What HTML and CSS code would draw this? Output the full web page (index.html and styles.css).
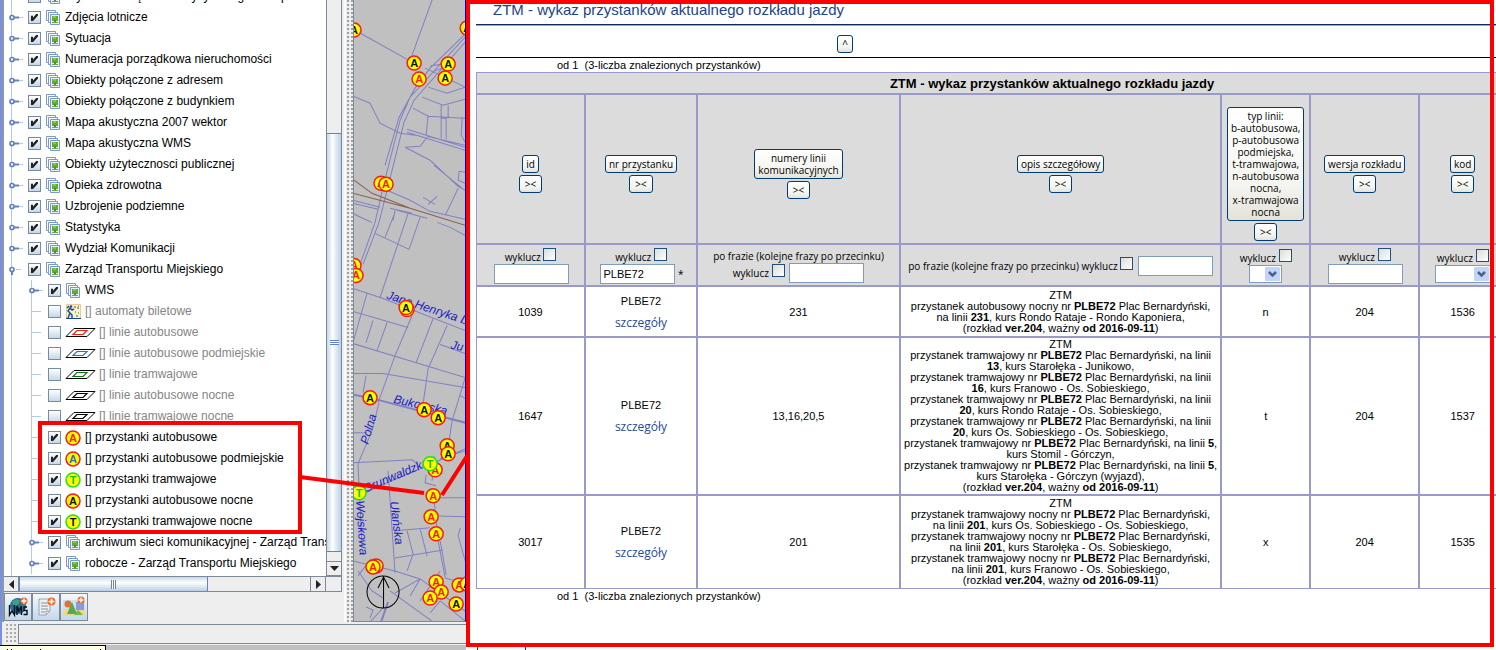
FILE: index.html
```html
<!DOCTYPE html>
<html lang="pl">
<head>
<meta charset="utf-8">
<title>ZTM - wykaz przystanków</title>
<link rel="stylesheet" href="styles.css">
</head>
<body>
<svg class="defs" aria-hidden="true">
  <defs>
    <symbol id="key" viewBox="0 0 14 21"><path d="M2.500 0V21" stroke="#b4cae0"/><path d="M7 10.500H14" stroke="#b4cae0"/><path d="M5 10.500H10" stroke="#6382bf" stroke-width="2"/><circle cx="3" cy="10.500" r="2" fill="#fff" stroke="#6382bf" stroke-width="1.700"/></symbol>
    <symbol id="keyopen" viewBox="0 0 14 21"><path d="M2.500 0V21M7 10.500H12" stroke="#b4cae0"/><path d="M3 12V16" stroke="#6382bf" stroke-width="2"/><circle cx="3" cy="10.500" r="2" fill="#fff" stroke="#6382bf" stroke-width="1.700"/></symbol>
    <symbol id="branch" viewBox="0 0 14 21"><path d="M2.500 0V21M2 10.500H12" stroke="#b4cae0"/></symbol>
    <symbol id="layers" viewBox="0 0 15 15"><path d="M.5.5H9.500V10.500H.5Z" fill="#fff" stroke="#7b98c6"/><path d="M2.500 2.500H11.500V12.500H2.500Z" fill="#fff" stroke="#7b98c6"/><path d="M4.500 4.500H13.500V14.500H4.500Z" fill="#e8f0fa" stroke="#7b98c6"/><path d="M6 6H12V11H6Z" fill="#58b030"/><path d="M7 6H10V8H7Z" fill="#86c840"/><path d="M8 10H10V13H8Z" fill="#8a7030"/><path d="M6 12H12V13H6Z" fill="#6aa84a"/></symbol>
    <symbol id="ticket" viewBox="0 0 15 15"><path d="M.5.5H14.500V14.500H.5Z" fill="#fbf3c0" stroke="#f4c888"/><path d="M2 14L4 9L2 7L4 4L6 6L8 5M4 9L6 11V14M1 4L3 2" stroke="#1850a8" stroke-width="1.500" fill="none"/><circle cx="5" cy="2.500" r="1.300" fill="#1850a8"/><path d="M8 3H10M11 4H13M9 8H10M12 9H13M10 12H12M12 2H13" stroke="#2060a0"/><path d="M0 14.500H15" stroke="#1840a0"/></symbol>
    <symbol id="para" viewBox="0 0 31 13"><path d="M1 10.500L9 2.500H30L22 10.500Z" fill="#fff" stroke="#000"/><path d="M8 8.500L12 4.500H22L18 8.500Z" fill="none" stroke="currentColor" stroke-width="1.200"/></symbol>
    <g id="am"><circle r="7" fill="#ff0" stroke="#f51c14" stroke-width="1.500"/><text class="mk mk-red" y="4">A</text></g>
    <g id="ak"><circle r="7" fill="#ff0" stroke="#f51c14" stroke-width="1.500"/><text class="mk" y="4">A</text></g>
    <g id="ab"><circle r="7" fill="#ff0" stroke="#f51c14" stroke-width="1.500"/><text class="mk mk-blue" y="4">A</text></g>
    <g id="tg"><circle r="7" fill="#ff0" stroke="#20e020" stroke-width="1.500"/><text class="mk mk-green" y="4">T</text></g>
    <g id="tk"><circle r="7" fill="#ff0" stroke="#20e020" stroke-width="1.500"/><text class="mk" y="4">T</text></g>
    <symbol id="plus" viewBox="0 0 8 8"><circle cx="4" cy="4" r="3.500" fill="#ee6a20"/><path d="M4 1.500V6.500M1.500 4H6.500" stroke="#fff" stroke-width="1.500"/></symbol>
  </defs>
</svg>
<div class="screen">
<section class="gis">
  <div class="work">
    <div class="side">
      <div class="treebox">
        <div class="viewport">
          <ul class="tree">
            <li><svg class="key"><use href="#key"/></svg><label><input type="checkbox" checked><svg class="lay"><use href="#layers"/></svg>Wydział Zarządzania Kryzysowego i Bezpieczeństwa</label></li>
            <li><svg class="key"><use href="#key"/></svg><label><input type="checkbox" checked><svg class="lay"><use href="#layers"/></svg>Zdjęcia lotnicze</label></li>
            <li><svg class="key"><use href="#key"/></svg><label><input type="checkbox" checked><svg class="lay"><use href="#layers"/></svg>Sytuacja</label></li>
            <li><svg class="key"><use href="#key"/></svg><label><input type="checkbox" checked><svg class="lay"><use href="#layers"/></svg>Numeracja porządkowa nieruchomości</label></li>
            <li><svg class="key"><use href="#key"/></svg><label><input type="checkbox" checked><svg class="lay"><use href="#layers"/></svg>Obiekty połączone z adresem</label></li>
            <li><svg class="key"><use href="#key"/></svg><label><input type="checkbox" checked><svg class="lay"><use href="#layers"/></svg>Obiekty połączone z budynkiem</label></li>
            <li><svg class="key"><use href="#key"/></svg><label><input type="checkbox" checked><svg class="lay"><use href="#layers"/></svg>Mapa akustyczna 2007 wektor</label></li>
            <li><svg class="key"><use href="#key"/></svg><label><input type="checkbox" checked><svg class="lay"><use href="#layers"/></svg>Mapa akustyczna WMS</label></li>
            <li><svg class="key"><use href="#key"/></svg><label><input type="checkbox" checked><svg class="lay"><use href="#layers"/></svg>Obiekty użytecznosci publicznej</label></li>
            <li><svg class="key"><use href="#key"/></svg><label><input type="checkbox" checked><svg class="lay"><use href="#layers"/></svg>Opieka zdrowotna</label></li>
            <li><svg class="key"><use href="#key"/></svg><label><input type="checkbox" checked><svg class="lay"><use href="#layers"/></svg>Uzbrojenie podziemne</label></li>
            <li><svg class="key"><use href="#key"/></svg><label><input type="checkbox" checked><svg class="lay"><use href="#layers"/></svg>Statystyka</label></li>
            <li><svg class="key"><use href="#key"/></svg><label><input type="checkbox" checked><svg class="lay"><use href="#layers"/></svg>Wydział Komunikacji</label></li>
            <li class="parent"><svg class="key"><use href="#keyopen"/></svg><label><input type="checkbox" checked><svg class="lay"><use href="#layers"/></svg>Zarząd Transportu Miejskiego</label>
              <ul class="sub">
                <li><svg class="key"><use href="#key"/></svg><label><input type="checkbox" checked><svg class="lay"><use href="#layers"/></svg>WMS</label></li>
                <li class="off"><svg class="key"><use href="#branch"/></svg><label><input type="checkbox"><svg class="lay"><use href="#ticket"/></svg>[] automaty biletowe</label></li>
                <li class="off"><svg class="key"><use href="#branch"/></svg><label><input type="checkbox"><svg class="para red"><use href="#para"/></svg>[] linie autobusowe</label></li>
                <li class="off"><svg class="key"><use href="#branch"/></svg><label><input type="checkbox"><svg class="para blue"><use href="#para"/></svg>[] linie autobusowe podmiejskie</label></li>
                <li class="off"><svg class="key"><use href="#branch"/></svg><label><input type="checkbox"><svg class="para green"><use href="#para"/></svg>[] linie tramwajowe</label></li>
                <li class="off"><svg class="key"><use href="#branch"/></svg><label><input type="checkbox"><svg class="para black"><use href="#para"/></svg>[] linie autobusowe nocne</label></li>
                <li class="off"><svg class="key"><use href="#branch"/></svg><label><input type="checkbox"><svg class="para black"><use href="#para"/></svg>[] linie tramwajowe nocne</label></li>
                <li><svg class="key"><use href="#branch"/></svg><label><input type="checkbox" checked><svg class="stop" viewBox="-8 -8 16 16"><use href="#am"/></svg>[] przystanki autobusowe</label></li>
                <li><svg class="key"><use href="#branch"/></svg><label><input type="checkbox" checked><svg class="stop" viewBox="-8 -8 16 16"><use href="#ab"/></svg>[] przystanki autobusowe podmiejskie</label></li>
                <li><svg class="key"><use href="#branch"/></svg><label><input type="checkbox" checked><svg class="stop" viewBox="-8 -8 16 16"><use href="#tg"/></svg>[] przystanki tramwajowe</label></li>
                <li><svg class="key"><use href="#branch"/></svg><label><input type="checkbox" checked><svg class="stop" viewBox="-8 -8 16 16"><use href="#ak"/></svg>[] przystanki autobusowe nocne</label></li>
                <li><svg class="key"><use href="#branch"/></svg><label><input type="checkbox" checked><svg class="stop" viewBox="-8 -8 16 16"><use href="#tk"/></svg>[] przystanki tramwajowe nocne</label></li>
                <li><svg class="key"><use href="#key"/></svg><label><input type="checkbox" checked><svg class="lay"><use href="#layers"/></svg>archiwum sieci komunikacyjnej - Zarząd Transportu</label></li>
                <li><svg class="key"><use href="#key"/></svg><label><input type="checkbox" checked><svg class="lay"><use href="#layers"/></svg>robocze - Zarząd Transportu Miejskiego</label></li>
              </ul>
            </li>
          </ul>
        </div>
        <div class="vscroll"><div class="vtrack"><div class="vthumb"><i class="grip-v"></i></div></div><button class="arrow" aria-label="W dół"><svg viewBox="0 0 9 5"><path d="M0 0H9L4.500 5Z"/></svg></button></div>
      </div>
      <div class="hscroll"><button class="arrow" aria-label="W lewo"><svg class="side-arrow" viewBox="0 0 5 9"><path d="M5 0V9L0 4.500Z"/></svg></button><div class="htrack"><div class="hthumb"><i class="grip-h"></i></div></div><button class="arrow" aria-label="W prawo"><svg class="side-arrow" viewBox="0 0 5 9"><path d="M0 0V9L5 4.500Z"/></svg></button><div class="corner"></div></div>
      <div class="tools">
        <button aria-label="Dodaj WMS"><svg viewBox="0 0 22 22"><circle cx="11" cy="10" r="8" fill="#2b6a9a"/><path d="M5 6C8 2 12 3 13 5L11 9L7 10ZM13 10L18 9L17 14L13 14Z" fill="#3fa07c"/><path d="M2.500 9V19L5 15L7.500 19V9M10 19V10L12 15L14.500 10V19M20 11H17V14.500H20V18.500H16.500" stroke="#061018" stroke-width="1.400" fill="none"/><use href="#plus" x="13" y="1" width="8" height="8"/></svg></button>
        <button aria-label="Dodaj dokument"><svg viewBox="0 0 22 22"><path d="M4 3H15V15L11 19H4Z" fill="#eceff2" stroke="#9aa4ae"/><path d="M6 7H13M6 10H13M6 13H13M6 16H10" stroke="#8a929a"/><path d="M11 19V15H15" fill="none" stroke="#9aa4ae"/><use href="#plus" x="12" y="1" width="9" height="9"/></svg></button>
        <button aria-label="Dodaj obraz"><svg viewBox="0 0 22 22"><path d="M0 4H22V20H0Z" fill="#cfe0ee"/><path d="M0 13H22V20H0Z" fill="#ecd98a"/><path d="M13 6H21V14H13Z" fill="#8c98dc"/><circle cx="5" cy="8" r="3.500" fill="#e07038"/><path d="M9 6L4 18H14Z" fill="#58a850"/><path d="M15 14L11 19H20Z" fill="#6cb850"/><use href="#plus" x="14" y="0" width="8" height="8"/></svg></button>
      </div>
    </div>
    <div class="splitter"></div>
    <div class="map">
      <svg viewBox="354 0 111 620" preserveAspectRatio="xMinYMin slice">
        <g class="roads">
          <path d="M432 0L412 55M360 33L412 62M425 68L465 87M465 37L410 97L400 120L383 187L375 222L360 264M465 42L414 100L404 122L388 186L379 222L363 264M465 34L430 68L415 88L399 117L385 165M430 66L455 62M432 72L446 66"/>
          <path d="M353 96L370 103L380 123L400 133L415 135M407 129L465 147M407 132L465 150M428 87L447 93L465 87M422 97L443 105L465 99M413 108L428 116L465 118M441 105V138M448 105V118M441 118H446V139M428 115L426 135M462 117L461 135L465 142M427 136L465 145M405 147L420 146L427 137M405 147L430 160L458 186L465 190M434 165L462 188M458 188L445 215M423 197L435 204M437 196L428 204M387 190L410 200L430 211L465 219M465 172L459 171L458 180L465 183"/>
          <path d="M353 200L380 207M353 203L378 209M353 213Q360 217 372 222M390 208L412 213M395 210L393 220M395 212L385 237M408 213L380 297M420 217L409 249M375 233L409 249M397 210L427 218M437 222L450 227L465 235"/>
          <path d="M353 288L383 298L465 330M367 293L353 342M353 311L408 327M373 320L366 342M387 322L377 350M412 315L395 355L378 402M353 343L465 377M433 318L416 362M447 325L428 368L423 403M440 344L465 353M353 373L383 373L465 387M465 377L452 420M366 375L363 392M379 402L372 430L358 463L362 545M353 432H367M460 395L465 398"/>
          <path d="M353 462L412 459L417 463M353 498L380 485L450 455L465 448M388 470L395 572M395 557L443 549M395 530L430 527M407 530L413 553L407 570M420 528L427 555M434 455L432 480M434 500L438 540L445 577L465 583M440 540L446 574M353 560L395 570L420 578L465 610M358 570L372 590L383 597M358 575L371 558M440 497H465M430 515L465 516M460 527L458 535L465 560M452 420L447 453M465 450L440 458M426 474L425 482L436 485M395 592L420 578M410 595L420 578M383 607L370 621M390 590L433 621M420 600L440 570M430 612L440 600L465 620M366 606L373 609L370 617"/>
        </g>
        <path class="road-wide" d="M353 394L377 399L465 422M388 601L381 621"/>
        <path class="rail" d="M353 179L372 193L410 208L465 225M353 193L410 208"/>
        <g class="streets">
          <text transform="translate(386 298) rotate(18)">Jana Henryka D</text>
          <text transform="translate(450 348) rotate(12)">Ju</text>
          <text transform="translate(393 402) rotate(13)">Bukowska</text>
          <text transform="translate(368 444) rotate(-74)">Polna</text>
          <text transform="translate(365 492) rotate(-23)">Grunwaldzka</text>
          <text transform="translate(356 500) rotate(86)">Wojskowa</text>
          <text transform="translate(390 501) rotate(83)">Ułańska</text>
        </g>
        <use href="#ak" x="354" y="30"/><use href="#ak" x="467" y="28"/><use href="#ak" x="414" y="63"/><use href="#ak" x="448" y="64"/><use href="#ak" x="445" y="78"/><use href="#am" x="419" y="79"/><use href="#am" x="381" y="183"/><use href="#am" x="386" y="184"/>
        <use href="#am" x="354" y="265"/><use href="#am" x="356" y="275"/><use href="#am" x="407" y="309"/><use href="#ak" x="406" y="307"/><use href="#ak" x="370" y="397"/><use href="#ak" x="424" y="409"/><use href="#ak" x="438" y="417"/>
        <use href="#ak" x="447" y="445"/><use href="#ak" x="448" y="453"/><use href="#am" x="435" y="469"/><use href="#tg" x="430" y="463"/><use href="#tg" x="359" y="492"/><use href="#am" x="433" y="495"/><use href="#am" x="431" y="516"/><use href="#am" x="436" y="533"/><use href="#am" x="376" y="565"/><use href="#am" x="373" y="566"/><use href="#am" x="436" y="581"/><use href="#am" x="441" y="591"/><use href="#am" x="430" y="597"/><use href="#am" x="459" y="584"/><use href="#ak" x="467" y="583"/><use href="#ak" x="456" y="603"/>
        <g class="north"><circle cx="383" cy="591" r="16"/><path d="M383.500 575V607M383.500 576L378 587M383.500 576L389 587"/></g>
      </svg>
    </div>
  </div>
  <div class="status"><i class="dots"></i><div class="field"></div></div>
  <div class="bottom"><div class="tip"><svg viewBox="0 0 104 4"><path d="M7 3.500H8M11 3.500H12M40 3.500H41M100 3.500H101" stroke="#000"/></svg></div></div>
  <svg class="marks" aria-hidden="true"><path d="M300 477L424 493M442 495L467 456"/><path d="M40 423H300V532H40Z"/></svg>
</section>

<main class="report">
  <h1>ZTM - wykaz przystanków aktualnego rozkładu jazdy</h1>
  <div class="fold"><button class="xp up">^</button></div>
  <p class="count">od 1 &nbsp;(3-liczba znalezionych przystanków)</p>
  <table>
    <colgroup><col class="c1"><col class="c2"><col class="c3"><col><col class="c5"><col class="c6"><col class="c7"></colgroup>
    <thead>
      <tr class="cap"><th colspan="7">ZTM - wykaz przystanków aktualnego rozkładu jazdy</th></tr>
      <tr class="heads">
        <th><button class="xp">id</button><button class="xp pair">&gt;&lt;</button></th>
        <th><button class="xp">nr przystanku</button><button class="xp pair">&gt;&lt;</button></th>
        <th><button class="xp">numery linii<br>komunikacyjnych</button><button class="xp pair">&gt;&lt;</button></th>
        <th><button class="xp">opis szczegółowy</button><button class="xp pair">&gt;&lt;</button></th>
        <th><button class="xp">typ linii:<br>b-autobusowa,<br>p-autobusowa<br>podmiejska,<br>t-tramwajowa,<br>n-autobusowa<br>nocna,<br>x-tramwajowa<br>nocna</button><button class="xp pair">&gt;&lt;</button></th>
        <th><button class="xp">wersja rozkładu</button><button class="xp pair">&gt;&lt;</button></th>
        <th><button class="xp">kod</button><button class="xp pair">&gt;&lt;</button></th>
      </tr>
      <tr class="filters">
        <td><label>wyklucz <input type="checkbox"></label><br><input type="text" aria-label="id"></td>
        <td><label>wyklucz <input type="checkbox"></label><br><input type="text" value="PLBE72" aria-label="nr przystanku"> *</td>
        <td>po frazie (kolejne frazy po przecinku)<br><label>wyklucz <input type="checkbox"></label> <input type="text" aria-label="numery linii"></td>
        <td><label>po frazie (kolejne frazy po przecinku) wyklucz <input type="checkbox"></label> <input type="text" aria-label="opis"></td>
        <td><label>wyklucz <input type="checkbox"></label><br><select class="narrow" aria-label="typ linii"><option></option></select></td>
        <td><label>wyklucz <input type="checkbox"></label><br><input type="text" aria-label="wersja rozkładu"></td>
        <td><label>wyklucz <input type="checkbox"></label><br><select aria-label="kod"><option></option></select></td>
      </tr>
    </thead>
    <tbody>
      <tr class="r1"><td>1039</td><td class="stopno">PLBE72<br><a href="#">szczegóły</a></td><td>231</td>
        <td class="desc">ZTM<br>przystanek autobusowy nocny nr <b>PLBE72</b> Plac Bernardyński,<br>na linii <b>231</b>, kurs Rondo Rataje - Rondo Kaponiera,<br>(rozkład <b>ver.204</b>, ważny <b>od 2016-09-11</b>)</td>
        <td>n</td><td>204</td><td>1536</td></tr>
      <tr class="r2"><td>1647</td><td class="stopno">PLBE72<br><a href="#">szczegóły</a></td><td>13,16,20,5</td>
        <td class="desc">ZTM<br>przystanek tramwajowy nr <b>PLBE72</b> Plac Bernardyński, na linii<br><b>13</b>, kurs Starołęka - Junikowo,<br>przystanek tramwajowy nr <b>PLBE72</b> Plac Bernardyński, na linii<br><b>16</b>, kurs Franowo - Os. Sobieskiego,<br>przystanek tramwajowy nr <b>PLBE72</b> Plac Bernardyński, na linii<br><b>20</b>, kurs Rondo Rataje - Os. Sobieskiego,<br>przystanek tramwajowy nr <b>PLBE72</b> Plac Bernardyński, na linii<br><b>20</b>, kurs Os. Sobieskiego - Os. Sobieskiego,<br>przystanek tramwajowy nr <b>PLBE72</b> Plac Bernardyński, na linii <b>5</b>,<br>kurs Stomil - Górczyn,<br>przystanek tramwajowy nr <b>PLBE72</b> Plac Bernardyński, na linii <b>5</b>,<br>kurs Starołęka - Górczyn (wyjazd),<br>(rozkład <b>ver.204</b>, ważny <b>od 2016-09-11</b>)</td>
        <td>t</td><td>204</td><td>1537</td></tr>
      <tr class="r3"><td>3017</td><td class="stopno">PLBE72<br><a href="#">szczegóły</a></td><td>201</td>
        <td class="desc">ZTM<br>przystanek tramwajowy nocny nr <b>PLBE72</b> Plac Bernardyński,<br>na linii <b>201</b>, kurs Os. Sobieskiego - Os. Sobieskiego,<br>przystanek tramwajowy nocny nr <b>PLBE72</b> Plac Bernardyński,<br>na linii <b>201</b>, kurs Starołęka - Os. Sobieskiego,<br>przystanek tramwajowy nocny nr <b>PLBE72</b> Plac Bernardyński,<br>na linii <b>201</b>, kurs Franowo - Os. Sobieskiego,<br>(rozkład <b>ver.204</b>, ważny <b>od 2016-09-11</b>)</td>
        <td>x</td><td>204</td><td>1535</td></tr>
    </tbody>
  </table>
  <p class="count">od 1 &nbsp;(3-liczba znalezionych przystanków)</p>
  <button class="xp below" aria-label="Zamknij"></button>
  <div class="frame"></div>
</main>
</div>
</body>
</html>
```

FILE: styles.css
```css
* { box-sizing: border-box; }
body {
  margin: 0;
  font-family: "Liberation Sans", Arial, sans-serif;
  font-size: 12px;
  color: #000;
  background: #fff;
}
button { font: inherit; color: inherit; margin: 0; padding: 0; }
svg { display: block; }
.defs { position: absolute; width: 0; height: 0; }

.screen {
  display: flex;
  height: 100vh;
  overflow: hidden;
}

/* GIS window on the left */
.gis {
  position: relative;
  flex: 0 0 auto;
  width: 31%;
  min-width: 466px;
  display: flex;
  flex-direction: column;
  background: #eee;
  overflow: hidden;
}
.work { flex: 1; display: flex; min-height: 0; border-left: 2px solid #7a90dc; }
.side { flex: 0 0 342px; min-width: 0; display: flex; flex-direction: column; border-left: 2px solid #8a98a8; }
.treebox { flex: 1; min-height: 0; display: flex; margin-right: 2px; background: #fff; }
.viewport { flex: 1; min-width: 0; overflow: hidden; }
.tree, .sub { list-style: none; margin: 0; padding: 0; }
.tree { margin-top: -14px; padding-left: 5px; }
.tree li { display: flex; flex-wrap: wrap; align-items: center; white-space: nowrap; line-height: 21px; }
.tree .parent { position: relative; }
.sub { flex: 0 0 100%; min-width: 0; padding-left: 20px; }
.sub::before {
  content: "";
  position: absolute;
  left: 2px;
  top: 21px;
  bottom: -2px;
  border-left: 1px solid #b4cae0;
}
.tree label { display: flex; align-items: center; height: 21px; flex: 1; min-width: 0; overflow: hidden; }
.key { width: 14px; height: 21px; flex: none; margin-right: 5px; }
.lay { width: 15px; height: 15px; margin: 0 4px 0 5px; flex: none; }
.stop { width: 16px; height: 16px; margin: 0 4px; flex: none; }
.para { width: 31px; height: 13px; margin: 0 3px 0 4px; flex: none; }
.red { color: #f02010; }
.blue { color: #1878e0; }
.green { color: #107010; }
.black { color: #000; }
.off { color: #858585; }
.tree input {
  appearance: none;
  flex: none;
  width: 13px;
  height: 13px;
  margin: 0;
  border: 1px solid #7a8a99;
  background: linear-gradient(#fff, #c4d8ea);
}
.tree input:checked::before {
  content: "";
  display: block;
  width: 7px;
  height: 7px;
  margin: 2px;
  background: #222;
  clip-path: polygon(0 25%, 28% 25%, 28% 55%, 75% 0, 100% 0, 100% 20%, 30% 100%, 0 100%);
}

.vscroll { flex: 0 0 16px; display: flex; flex-direction: column; border: solid #7a8a99; border-width: 0 1px 0 1px; }
.vtrack { flex: 1; background: #eee; padding: 133px 0 9px; }
.vthumb {
  height: 100%;
  display: flex;
  align-items: center;
  justify-content: center;
  border: solid #6382bf;
  border-width: 1px 0;
  background: linear-gradient(90deg, #c4d8ea, #fff 40%, #b8cfe5);
}
.grip-v { width: 9px; height: 5px; background: repeating-linear-gradient(#6382bf 0 1px, #fff 1px 2px); }
.grip-h { width: 5px; height: 9px; background: repeating-linear-gradient(90deg, #6382bf 0 1px, #fff 1px 2px); }
.arrow {
  display: flex;
  align-items: center;
  justify-content: center;
  width: 14px;
  height: 15px;
  border: solid #7a8a99;
  border-width: 1px 0;
  background: #eee;
  fill: #222;
}
.arrow svg { width: 9px; height: 5px; }
.arrow .side-arrow { width: 5px; height: 9px; }
.hscroll { display: flex; height: 16px; margin-right: 2px; border: 1px solid #7a8a99; border-left: 0; }
.hscroll .arrow { width: 15px; height: 14px; border-width: 0 1px 0 0; }
.htrack { flex: 1; border-right: 1px solid #7a8a99; background: #eee; }
.hthumb {
  width: 65%;
  height: 14px;
  display: flex;
  align-items: center;
  justify-content: center;
  border: solid #6382bf;
  border-width: 0 1px;
  background: linear-gradient(#c4d8ea, #fff 40%, #b8cfe5);
}
.corner { width: 15px; background: #eee; }
.tools { display: flex; height: 30px; padding-top: 1px; }
.tools button {
  width: 28px;
  height: 28px;
  border: 1px solid #7a8a99;
  background: linear-gradient(#f4f8fc, #c4d8ea);
  display: flex;
  align-items: center;
  justify-content: center;
}
.tools svg { width: 22px; height: 22px; }

.splitter {
  flex: 0 0 9px;
  border-left: 2px solid #fafafa;
  background: radial-gradient(circle at 1px 1px, #a0a0a0 0 1px, #eee 1px) 1px 0 / 4px 4px;
}
.map { flex: 1; min-width: 0; background: #c0c0c0; border: solid #7a8a99; border-width: 0 1px 1px 1px; border-right-color: #0000b8; overflow: hidden; }
.map svg { width: 100%; height: 100%; }
.roads { fill: none; stroke: #8080c4; stroke-width: 1; }
.road-wide { fill: none; stroke: #8080c4; stroke-width: 2; }
.rail { fill: none; stroke: #86604e; stroke-width: 1; }
.streets { font-size: 12px; font-style: italic; fill: #1c1cc4; }
.mk { font-size: 11px; font-weight: bold; text-anchor: middle; fill: #111; }
.mk-red { fill: #f51c14; }
.mk-blue { fill: #3870b0; }
.mk-green { fill: #18c018; }
.north { fill: none; stroke: #000; stroke-width: 1; }

.status { flex: 0 0 23px; display: flex; padding: 2px 0 0 4px; border-left: 2px solid #7a90dc; }
.dots { width: 12px; height: 19px; background: radial-gradient(circle at 1px 1px, #aaa 0 1px, #eee 1px) 0 0 / 4px 4px; }
.field { flex: 1; height: 20px; border: 1px solid #7a8a99; border-right: 0; }
.bottom { flex: 0 0 5px; background: #c0c0c0; }
.tip { width: 106px; height: 5px; border: solid #000; border-width: 1px 1px 0 0; background: #ffffe1; }
.tip svg { width: 104px; height: 4px; }
.marks { position: absolute; left: 0; top: 0; width: 100%; height: 100%; pointer-events: none; fill: none; stroke: #f00; stroke-width: 4; }

/* Stop list on the right */
.report {
  position: relative;
  flex: 1;
  min-width: 0;
  padding-left: 10px;
  overflow: hidden;
}
h1 {
  margin: 0;
  height: 26px;
  padding-left: 17px;
  border-bottom: 1px solid #8ca8cc;
  box-shadow: inset 0 -1px #0c2c60;
  font-size: 15px;
  font-weight: normal;
  line-height: 20px;
  color: #1c4488;
}
.fold { height: 32px; padding-top: 9px; display: flex; justify-content: center; border-bottom: 1px solid #000; padding-right: 282px; }
.count { margin: 0; padding-left: 81px; font-size: 11px; line-height: 14px; }
.xp {
  display: block;
  margin: 0 auto 2px;
  padding: 2px 3px;
  border: 1px solid #003c74;
  border-radius: 3px;
  background: linear-gradient(#fff, #f4f4f0 70%, #e4e2d8);
  font: 10px/12px "Open Sans", sans-serif;
  white-space: nowrap;
}
.xp.up { margin: 0; width: 16px; height: 18px; }
.xp.pair { padding: 2px 5px; }
.xp.below { width: 49px; height: 18px; margin: 42px 0 0 1px; }

table {
  width: 101%;
  table-layout: fixed;
  border-spacing: 0;
  font-size: 11px;
  text-align: center;
}
th, td { border: 1px solid #9999cc; padding: 0; white-space: nowrap; }
.c1 { width: 109px; }
.c2 { width: 112px; }
.c3 { width: 203px; }
.c5 { width: 89px; }
.c6 { width: 109px; }
.c7 { width: 87px; }
thead { background: #dcdcdc; }
.cap { height: 22px; font-size: 13px; }
.cap th { padding-left: 122px; }
.heads { height: 150px; }
.heads th { padding-top: 12px; font-weight: normal; }
.filters { height: 42px; font: 10px/14px "Open Sans", sans-serif; }
.filters td { padding-top: 2px; }
.filters input[type="checkbox"] {
  appearance: none;
  width: 13px;
  height: 13px;
  margin: 0;
  border: 1px solid #1c5180;
  background: linear-gradient(135deg, #dcdcd7, #fff);
}
.filters input[type="text"] {
  width: 75px;
  height: 20px;
  margin: 0 0 0 2px;
  padding: 0 2px;
  border: 1px solid #7f9db9;
  background: #fff;
  font: 11px "Liberation Sans", Arial, sans-serif;
}
select {
  appearance: none;
  width: 56px;
  height: 18px;
  border: 1px solid #7f9db9;
  border-radius: 0;
  background: #fff url("data:image/svg+xml,%3Csvg xmlns='http://www.w3.org/2000/svg' width='15' height='14'%3E%3Crect width='15' height='14' rx='1' fill='%23c2d3fc'/%3E%3Cpath d='M4 5l3.500 3.500L11 5' fill='none' stroke='%234d6185' stroke-width='2.500'/%3E%3C/svg%3E") no-repeat right 1px center;
}
.narrow { width: 33px; }
.r1 { height: 51px; }
.r2 { height: 158px; }
.r3 { height: 94px; }
.desc { line-height: 11px; }
.stopno { line-height: 22px; }
.stopno a { font: 12px/22px "Open Sans", sans-serif; color: #2a4c90; text-decoration: none; }

.frame {
  position: absolute;
  inset: 0 2px 3px 0;
  border: 4px solid #f00;
  pointer-events: none;
}
```
